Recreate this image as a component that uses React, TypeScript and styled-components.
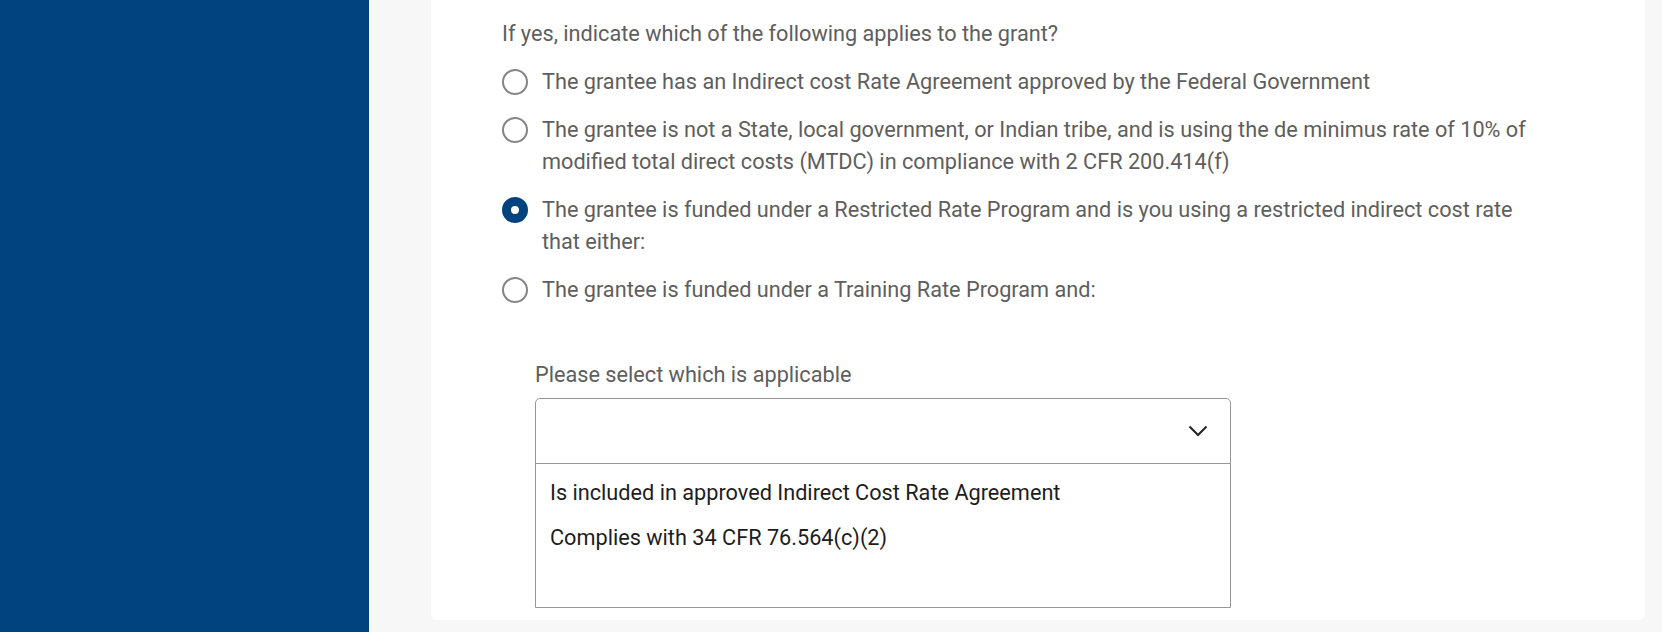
import React from 'react'
import styled, { createGlobalStyle } from 'styled-components'

const BLUE = '#00437f'

const GlobalStyle = createGlobalStyle`
  html, body {
    margin: 0;
    padding: 0;
    background: #f7f7f7;
    font-family: Roboto, 'Liberation Sans', sans-serif;
  }
`

const Page = styled.div`
  display: flex;
  height: 632px;
  overflow: hidden;
`

const Sidebar = styled.div`
  width: 369px;
  flex-shrink: 0;
  background: ${BLUE};
`

const Main = styled.div`
  flex: 1;
  background: #f7f7f7;
  padding: 0 17px 12px 62px;
`

const Card = styled.div`
  background: #fff;
  border-radius: 0 0 6px 6px;
  padding: 18px 100px 12px 71px;
`

const Question = styled.p`
  margin: 0 0 16px;
  font-size: 21.7px;
  line-height: 32px;
  color: #5e5e5e;
`

const Options = styled.div`
  display: flex;
  flex-direction: column;
  gap: 16px;
`

const Option = styled.label`
  display: flex;
  align-items: flex-start;
  gap: 14px;
  font-size: 21.7px;
  line-height: 32px;
  color: #5e5e5e;
  cursor: pointer;
`

const Radio = styled.span<{ checked?: boolean }>`
  flex-shrink: 0;
  box-sizing: border-box;
  width: 26px;
  height: 26px;
  margin-top: 3px;
  border-radius: 50%;
  border: ${props => (props.checked ? `9px solid ${BLUE}` : '2px solid #858585')};
  background: #fff;
`

const Sub = styled.div`
  margin: 53px 0 0 33px;
  width: 696px;
`

const SelectLabel = styled.p`
  margin: 0 0 7px;
  font-size: 21.7px;
  line-height: 32px;
  color: #5e5e5e;
`

const Dropdown = styled.div`
  border: 1.5px solid #979797;
  border-radius: 5px 5px 0 0;
`

const Trigger = styled.div`
  height: 64px;
  display: flex;
  align-items: center;
  justify-content: flex-end;
  padding-right: 22px;
  border-bottom: 1.5px solid #979797;
`

const Menu = styled.ul`
  list-style: none;
  margin: 0;
  padding: 6px 0 47px;
`

const Item = styled.li`
  padding: 0 14px;
  font-size: 21.7px;
  line-height: 45px;
  color: #1d1d1d;
`

const Chevron = () => (
  <svg width="20" height="12" viewBox="0 0 20 12" fill="none">
    <path d="M1.5 1.5 L10 10 L18.5 1.5" stroke="#222" strokeWidth="2" />
  </svg>
)

const choices = [
  {
    text: 'The grantee has an Indirect cost Rate Agreement approved by the Federal Government',
    checked: false,
  },
  {
    text: 'The grantee is not a State, local government, or Indian tribe, and is using the de minimus rate of 10% of modified total direct costs (MTDC) in compliance with 2 CFR 200.414(f)',
    checked: false,
  },
  {
    text: 'The grantee is funded under a Restricted Rate Program and is you using a restricted indirect cost rate that either:',
    checked: true,
  },
  {
    text: 'The grantee is funded under a Training Rate Program and:',
    checked: false,
  },
]

const App = () => (
  <Page>
    <GlobalStyle />
    <Sidebar />
    <Main>
      <Card>
        <Question>If yes, indicate which of the following applies to the grant?</Question>
        <Options>
          {choices.map((c, i) => (
            <Option key={i}>
              <Radio checked={c.checked} />
              <span>{c.text}</span>
            </Option>
          ))}
        </Options>
        <Sub>
          <SelectLabel>Please select which is applicable</SelectLabel>
          <Dropdown>
            <Trigger>
              <Chevron />
            </Trigger>
            <Menu>
              <Item>Is included in approved Indirect Cost Rate Agreement</Item>
              <Item>Complies with 34 CFR 76.564(c)(2)</Item>
            </Menu>
          </Dropdown>
        </Sub>
      </Card>
    </Main>
  </Page>
)

export default App
